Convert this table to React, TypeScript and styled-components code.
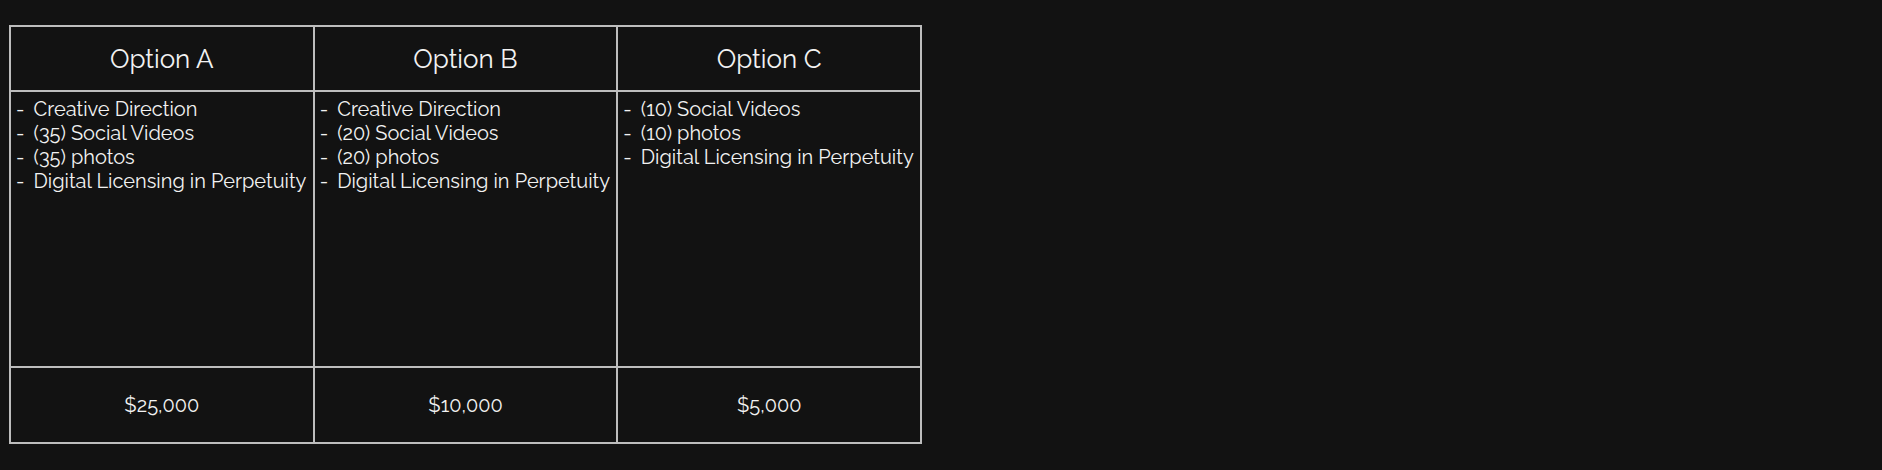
import React from "react";
import styled, { createGlobalStyle } from "styled-components";

const Global = createGlobalStyle`
  html, body { margin: 0; padding: 0; background: #121212; }
  body { font-family: Raleway, Lato, "Open Sans", sans-serif; color: #f2f2f2; }
`;

const Page = styled.div`
  padding: 25px 0 0 9px;
  min-height: 470px;
  box-sizing: border-box;
`;

const Table = styled.table`
  border-collapse: collapse;
  width: 913px;
  table-layout: fixed;
`;

const Cell = styled.td<{ $kind: "head" | "body" | "foot" }>`
  border: 2px solid #bdbdbd;
  padding: ${(p) => (p.$kind === "body" ? "5px 4px 0 5px" : p.$kind === "foot" ? "1px 0 1px 0" : "0")};
  text-align: ${(p) => (p.$kind === "body" ? "left" : "center")};
  vertical-align: ${(p) => (p.$kind === "body" ? "top" : "middle")};
  height: ${(p) => (p.$kind === "head" ? "63px" : p.$kind === "body" ? "269px" : "72px")};
  font-size: ${(p) => (p.$kind === "head" ? "26px" : "20px")};
  font-weight: 400;
  line-height: 24px;
  white-space: nowrap;
`;

const Item = styled.div`
  display: flex;
`;

const Dash = styled.span`
  width: 17.5px;
  flex: none;
`;

const options = [
  {
    name: "Option A",
    items: ["Creative Direction", "(35) Social Videos", "(35) photos", "Digital Licensing in Perpetuity"],
    price: "$25,000",
  },
  {
    name: "Option B",
    items: ["Creative Direction", "(20) Social Videos", "(20) photos", "Digital Licensing in Perpetuity"],
    price: "$10,000",
  },
  {
    name: "Option C",
    items: ["(10) Social Videos", "(10) photos", "Digital Licensing in Perpetuity"],
    price: "$5,000",
  },
];

export default function App() {
  return (
    <Page>
      <Global />
      <Table>
        <tbody>
          <tr>
            {options.map((o) => (
              <Cell as="th" $kind="head" key={o.name}>{o.name}</Cell>
            ))}
          </tr>
          <tr>
            {options.map((o) => (
              <Cell $kind="body" key={o.name}>
                {o.items.map((it) => (
                  <Item key={it}>
                    <Dash>-</Dash>
                    <span>{it}</span>
                  </Item>
                ))}
              </Cell>
            ))}
          </tr>
          <tr>
            {options.map((o) => (
              <Cell $kind="foot" key={o.name}>{o.price}</Cell>
            ))}
          </tr>
        </tbody>
      </Table>
    </Page>
  );
}
